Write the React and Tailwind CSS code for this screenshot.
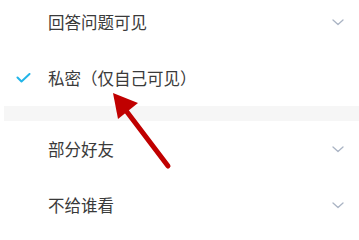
import React from 'react';

const Chevron = () => (
    <svg width="12" height="7" viewBox="0 0 12 7" fill="none" className="text-[#aab4c4]">
        <path d="M1 1l5 4.5L11 1" stroke="currentColor" strokeWidth="1.3" strokeLinecap="round" strokeLinejoin="round" />
    </svg>
);

const Row = ({ label, checked, arrow }) => (
    <div className="h-14 flex items-center pl-[16px] pr-[15px]">
        <div className="w-8 flex items-center">
            {checked && (
                <svg width="15" height="10" viewBox="0 0 15 10" fill="none">
                    <path d="M1.5 4.5l4 4L13.5 1" stroke="#22b5e8" strokeWidth="2" strokeLinecap="round" strokeLinejoin="round" />
                </svg>
            )}
        </div>
        <span className="flex-1 text-[16.5px] text-[#3a3a3a] leading-none">{label}</span>
        {arrow && <Chevron />}
    </div>
);

const App = () => {
    return (
        <div
            className="relative w-[359px] h-[231px] overflow-hidden bg-white"
            style={{ fontFamily: '"Noto Sans CJK SC", "Noto Sans", sans-serif' }}
        >
            <div className="-mt-[6px]">
                <Row label="回答问题可见" arrow />
                <Row label="私密（仅自己可见）" checked />
                <div className="h-[15px] ml-[4px] bg-[#f6f6f6]"></div>
                <Row label="部分好友" arrow />
                <Row label="不给谁看" arrow />
            </div>

            {/* red annotation arrow */}
            <svg className="absolute left-0 top-0 pointer-events-none" width="359" height="231" viewBox="0 0 359 231">
                <line x1="168" y1="166" x2="121" y2="104" stroke="#c00000" strokeWidth="5" strokeLinecap="round" />
                <polygon points="113,93 118,119 138,103" fill="#c00000" />
            </svg>
        </div>
    );
};

export default App;
